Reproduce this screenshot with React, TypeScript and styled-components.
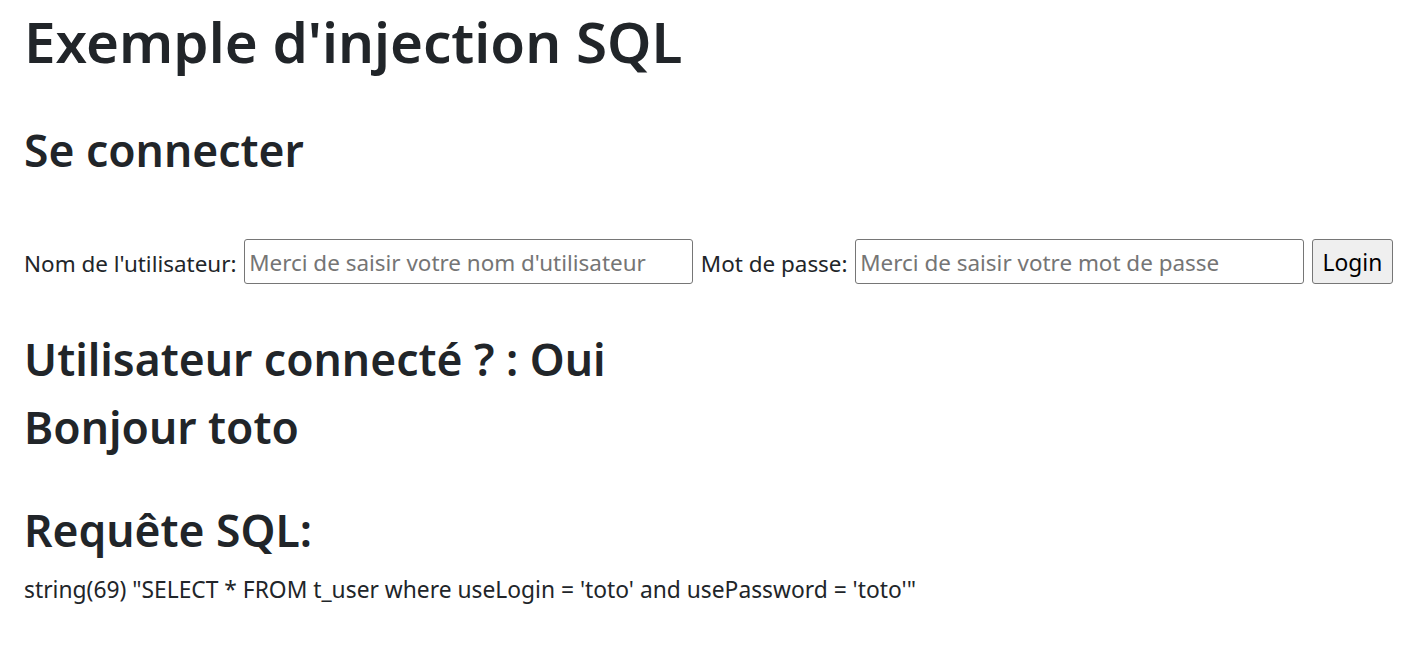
import React from "react";
import styled, { createGlobalStyle } from "styled-components";

const GlobalStyle = createGlobalStyle`
  html, body { margin: 0; padding: 0; background: #fff; }
  body {
    font-family: "Noto Sans", "Open Sans", sans-serif;
    color: #212529;
  }
`;

const App = () => {
  return (
    <>
      <GlobalStyle />
      <Page>
        <Title>Exemple d'injection SQL</Title>
        <Heading mt={43}>Se connecter</Heading>
        <LoginForm onSubmit={(e) => e.preventDefault()}>
          <Label htmlFor="login">Nom de l'utilisateur:</Label>
          <Field id="login" type="text" placeholder="Merci de saisir votre nom d'utilisateur" />
          <Label htmlFor="password">Mot de passe:</Label>
          <Field id="password" type="password" placeholder="Merci de saisir votre mot de passe" />
          <Button type="submit">Login</Button>
        </LoginForm>
        <Heading mt={46}>Utilisateur connecté ? : Oui</Heading>
        <Heading mt={10}>Bonjour toto</Heading>
        <Heading mt={45}>Requête SQL:</Heading>
        <Dump>string(69) "SELECT * FROM t_user where useLogin = 'toto' and usePassword = 'toto'"</Dump>
      </Page>
    </>
  );
};
export default App;

const Page = styled.main`
  padding: 6px 24px 0;
`;
const Title = styled.h1`
  margin: 0;
  font-size: 56.5px;
  font-weight: 600;
  line-height: 72px;
`;
const Heading = styled.h2<{ mt: number }>`
  margin: ${(p) => p.mt}px 0 0;
  font-size: 44.4px;
  font-weight: 600;
  line-height: 58px;
`;
const LoginForm = styled.form`
  display: flex;
  align-items: center;
  gap: 7.7px;
  margin-top: 60px;
  height: 45px;
  & > * { flex-shrink: 0; }
`;
const Label = styled.label`
  font-size: 22.45px;
  line-height: 45px;
  padding-top: 3px;
  white-space: nowrap;
`;
const Field = styled.input`
  box-sizing: border-box;
  width: 449px;
  height: 45px;
  padding: 2px 4px 0;
  border: 1px solid #767676;
  border-radius: 3px;
  font: 22.45px "Noto Sans", "Open Sans", sans-serif;
  color: #212529;
  &::placeholder { color: #757575; }
`;
const Button = styled.button`
  box-sizing: border-box;
  width: 81px;
  height: 45px;
  padding: 2px 0 0;
  border: 1px solid #767676;
  border-radius: 3px;
  background: #efefef;
  font: 22.8px "Noto Sans", "Open Sans", sans-serif;
  color: #000;
`;
const Dump = styled.div`
  margin-top: 14px;
  font-size: 22.8px;
  line-height: 33px;
`;
